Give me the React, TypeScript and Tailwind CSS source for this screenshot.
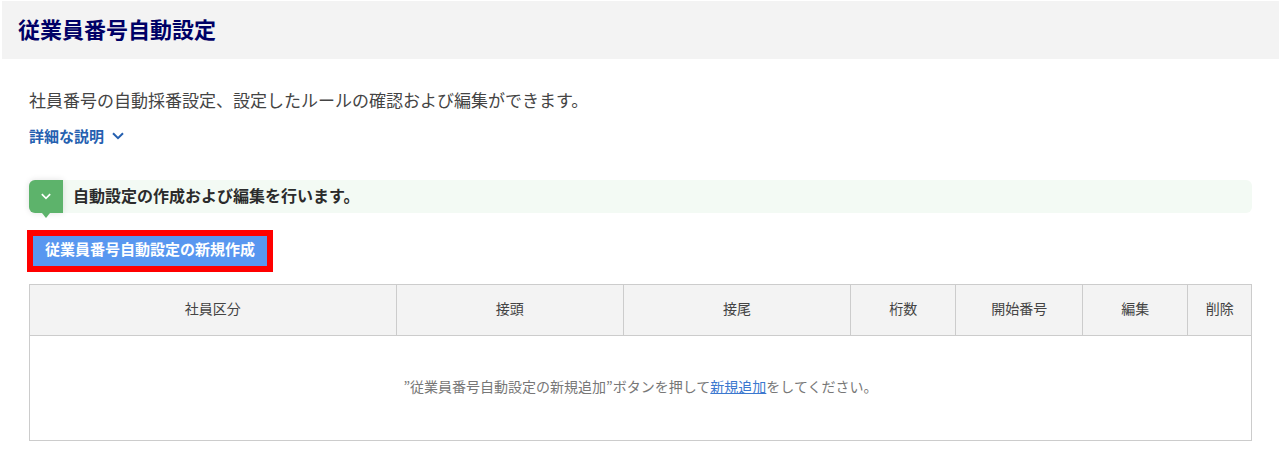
import { useState } from "react";

interface Column {
  label: string;
  width: string;
}

const columns: Column[] = [
  { label: "社員区分", width: "w-[30%]" },
  { label: "接頭", width: "w-[18.6%]" },
  { label: "接尾", width: "w-[18.6%]" },
  { label: "桁数", width: "w-[8.6%]" },
  { label: "開始番号", width: "w-[10.4%]" },
  { label: "編集", width: "w-[8.6%]" },
  { label: "削除", width: "w-[5.2%]" },
];

function Chevron({ className }: { className: string }) {
  return (
    <svg className={className} viewBox="0 0 12 8" fill="none" stroke="currentColor" strokeWidth={2} aria-hidden="true">
      <path d="M1 1.2l5 5 5-5" />
    </svg>
  );
}

function SectionHeading({ title }: { title: string }) {
  return (
    <div className="flex h-[33px] items-center gap-[10px] rounded-md bg-[#f3faf4]">
      <div className="relative flex h-full w-[34px] items-center justify-center rounded-l-md bg-[#5db36b] text-white shadow-[0_0_6px_rgba(0,0,0,0.12)]">
        <Chevron className="h-[7px] w-[10px]" />
        {/* Pointer under the marker */}
        <svg className="absolute top-full left-1/2 h-[5px] w-2 -translate-x-1/2 fill-[#5db36b]" viewBox="0 0 8 5" aria-hidden="true">
          <path d="M0 0h8L4 5z" />
        </svg>
      </div>
      <h2 className="pb-1 text-base font-bold text-[#2b2b2b]">{title}</h2>
    </div>
  );
}

function RulesTable() {
  return (
    <table className="w-full table-fixed border-collapse text-sm leading-6">
      <thead className="bg-[#f3f3f3] text-[#444444]">
        <tr>
          {columns.map((column) => (
            <th key={column.label} scope="col" className={`${column.width} h-[51px] border border-[#cccccc] pb-1 text-center font-normal`}>
              {column.label}
            </th>
          ))}
        </tr>
      </thead>
      <tbody>
        <tr>
          <td colSpan={columns.length} className="h-[105px] border border-[#cccccc] pb-1 text-center text-[#777777]">
            ”従業員番号自動設定の新規追加”ボタンを押して
            <a href="#new" className="text-[#3b78cf] underline">新規追加</a>
            をしてください。
          </td>
        </tr>
      </tbody>
    </table>
  );
}

export default function App() {
  const [open, setOpen] = useState(false);

  return (
    <div className="bg-white pt-px pr-px pl-0.5 font-['Noto_Sans_CJK_JP',sans-serif]">
      <header className="flex h-[58px] items-center bg-[#f3f3f3] px-4 pb-1">
        <h1 className="text-[22px] leading-8 font-bold text-[#000066]">従業員番号自動設定</h1>
      </header>

      <main className="px-[27px] pt-[29px] pb-3">
        <p className="text-[17px] leading-6 text-[#444444]">
          社員番号の自動採番設定、設定したルールの確認および編集ができます。
        </p>
        <button
          type="button"
          aria-expanded={open}
          onClick={() => setOpen(!open)}
          className="mt-3 flex items-center gap-2 text-[15px] leading-6 font-bold text-[#2560b0]"
        >
          詳細な説明
          <Chevron className={open ? "h-2 w-3 rotate-180" : "h-2 w-3"} />
        </button>

        <section className="mt-8">
          <SectionHeading title="自動設定の作成および編集を行います。" />
          <div className="-mx-0.5 mt-[17px] mb-3">
            <button type="button" className="block border-6 border-[#ff0000] bg-[#5897f0] px-3 pb-1 text-[15px] leading-[26px] font-bold text-white">
              従業員番号自動設定の新規作成
            </button>
          </div>
          <RulesTable />
        </section>
      </main>
    </div>
  );
}
